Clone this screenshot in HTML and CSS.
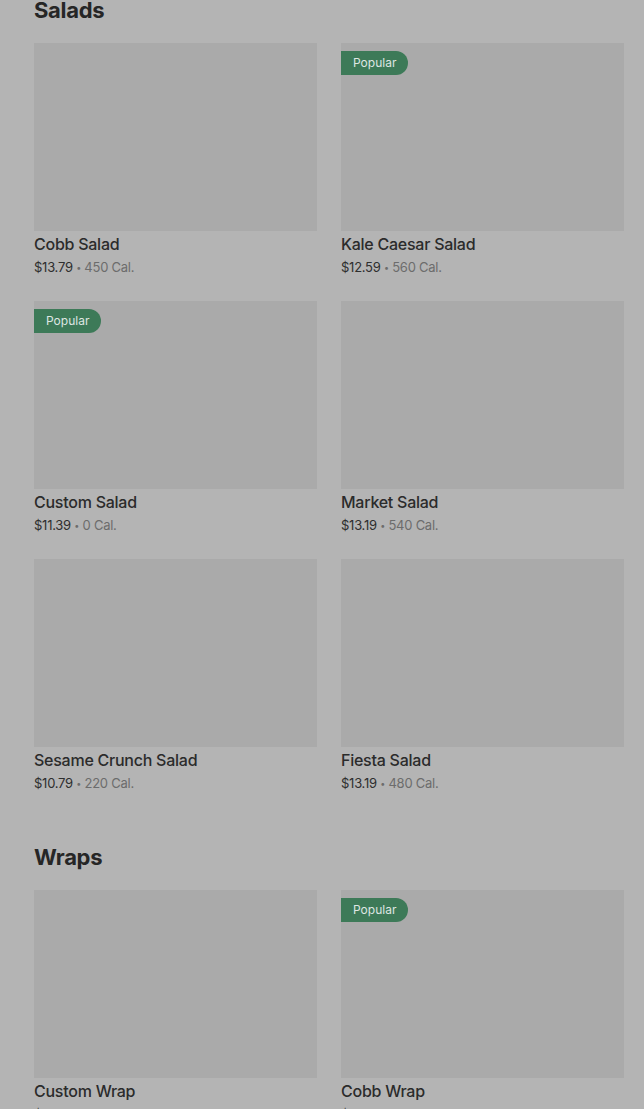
FILE: index.html
```html
<!DOCTYPE html>
<html lang="en">
<head>
    <meta charset="UTF-8">
    <title>Menu</title>
    <link rel="stylesheet" href="styles.css">
</head>
<body>
    <main class="menu">
        <section class="menu-section">
            <h2>Salads</h2>
            <div class="item-grid">
                <div class="item">
                    <div class="item-image"></div>
                    <div class="item-name">Cobb Salad</div>
                    <div class="item-meta"><span class="price">$13.79</span> <span class="dot">•</span> 450 Cal.</div>
                </div>
                <div class="item">
                    <div class="item-image"><span class="badge">Popular</span></div>
                    <div class="item-name">Kale Caesar Salad</div>
                    <div class="item-meta"><span class="price">$12.59</span> <span class="dot">•</span> 560 Cal.</div>
                </div>
                <div class="item">
                    <div class="item-image"><span class="badge">Popular</span></div>
                    <div class="item-name">Custom Salad</div>
                    <div class="item-meta"><span class="price">$11.39</span> <span class="dot">•</span> 0 Cal.</div>
                </div>
                <div class="item">
                    <div class="item-image"></div>
                    <div class="item-name">Market Salad</div>
                    <div class="item-meta"><span class="price">$13.19</span> <span class="dot">•</span> 540 Cal.</div>
                </div>
                <div class="item">
                    <div class="item-image"></div>
                    <div class="item-name">Sesame Crunch Salad</div>
                    <div class="item-meta"><span class="price">$10.79</span> <span class="dot">•</span> 220 Cal.</div>
                </div>
                <div class="item">
                    <div class="item-image"></div>
                    <div class="item-name">Fiesta Salad</div>
                    <div class="item-meta"><span class="price">$13.19</span> <span class="dot">•</span> 480 Cal.</div>
                </div>
            </div>
        </section>
        <section class="menu-section">
            <h2>Wraps</h2>
            <div class="item-grid">
                <div class="item">
                    <div class="item-image"></div>
                    <div class="item-name">Custom Wrap</div>
                    <div class="item-meta"><span class="price">$10.19</span> <span class="dot">•</span> 0 Cal.</div>
                </div>
                <div class="item">
                    <div class="item-image"><span class="badge">Popular</span></div>
                    <div class="item-name">Cobb Wrap</div>
                    <div class="item-meta"><span class="price">$12.59</span> <span class="dot">•</span> 710 Cal.</div>
                </div>
            </div>
        </section>
    </main>
</body>
</html>
```

FILE: styles.css
```css
html, body {
    margin: 0;
    height: 100%;
    overflow: hidden;
}

body {
    background: #b4b4b4;
    font-family: Inter, "Noto Sans", sans-serif;
    color: #2a2a2a;
}

.menu {
    padding: 0 20px 0 34px;
    margin-top: -4px;
}

.menu-section {
    margin-bottom: 51px;
}

.menu-section h2 {
    margin: 0 0 19px;
    font-size: 22px;
    line-height: 28px;
    font-weight: 700;
    letter-spacing: -0.3px;
    color: #262626;
}

.item-grid {
    display: grid;
    grid-template-columns: 1fr 1fr;
    column-gap: 24px;
    row-gap: 25px;
}

.item-image {
    position: relative;
    height: 188px;
    background: #aaaaaa;
    margin-bottom: 3px;
}

.badge {
    position: absolute;
    top: 8px;
    left: 0;
    height: 24px;
    line-height: 24px;
    padding: 0 12px;
    border-radius: 0 12px 12px 0;
    background: #3d7a58;
    color: #dfe6e2;
    font-size: 12px;
}

.item-name {
    font-size: 16px;
    line-height: 20px;
    font-weight: 500;
    letter-spacing: -0.25px;
    color: #2b2b2b;
}

.item-meta {
    margin-top: 4px;
    height: 18px;
    font-size: 13px;
    line-height: 18px;
    letter-spacing: -0.25px;
    color: #6c6c6c;
}

.price {
    color: #2e2e2e;
}

.dot {
    font-size: 9px;
    line-height: 0;
    vertical-align: 1px;
}
```
